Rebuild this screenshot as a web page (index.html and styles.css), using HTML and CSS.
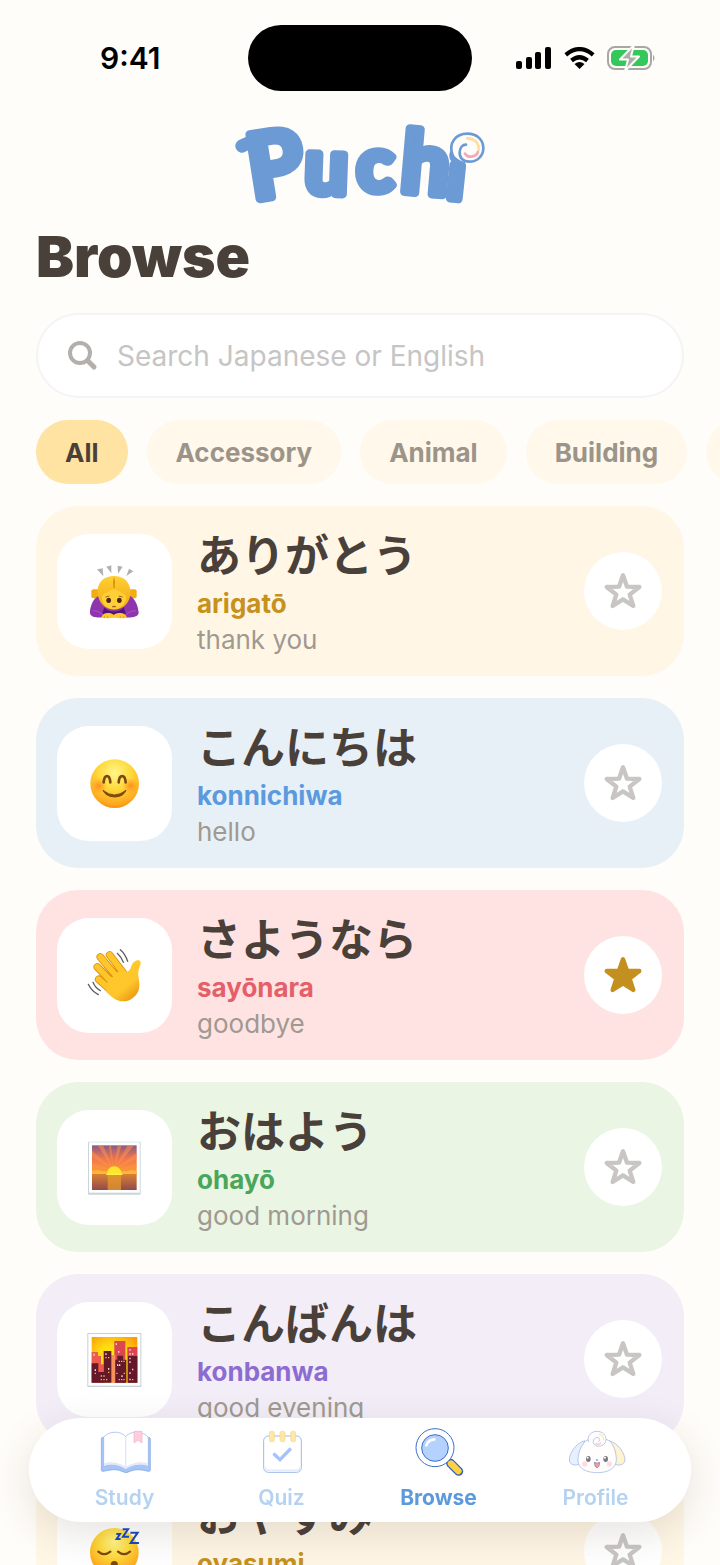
FILE: index.html
```
<!DOCTYPE html>
<html lang="en">
<head>
    <meta charset="UTF-8">
    <meta name="viewport" content="width=device-width, initial-scale=1.0">
    <title>Puchi - Browse</title>
    <link rel="stylesheet" href="styles.css">
</head>
<body>

    <!-- shared shapes -->
    <svg class="defs" aria-hidden="true">
        <defs>
            <radialGradient id="face" cx="50%" cy="28%" r="75%">
                <stop offset="0" stop-color="#fff68a"/>
                <stop offset="0.45" stop-color="#ffd93b"/>
                <stop offset="0.85" stop-color="#fda81d"/>
                <stop offset="1" stop-color="#ee8a12"/>
            </radialGradient>
            <radialGradient id="blush">
                <stop offset="0" stop-color="#ff7a1c" stop-opacity="0.75"/>
                <stop offset="1" stop-color="#ff8a1c" stop-opacity="0"/>
            </radialGradient>
            <linearGradient id="hand" x1="0" y1="0" x2="0.7" y2="1">
                <stop offset="0" stop-color="#ffc926"/>
                <stop offset="0.7" stop-color="#ffc62c"/>
                <stop offset="1" stop-color="#e89a10"/>
            </linearGradient>
            <linearGradient id="hair" x1="0" y1="0" x2="0" y2="1">
                <stop offset="0" stop-color="#ffd035"/>
                <stop offset="1" stop-color="#f0a80c"/>
            </linearGradient>
            <linearGradient id="sky" x1="0" y1="0" x2="0" y2="1">
                <stop offset="0" stop-color="#8a5a86"/>
                <stop offset="0.45" stop-color="#ee7650"/>
                <stop offset="1" stop-color="#ffa02c"/>
            </linearGradient>
            <linearGradient id="sea" x1="0" y1="0" x2="0" y2="1">
                <stop offset="0" stop-color="#d98034"/>
                <stop offset="1" stop-color="#914a4c"/>
            </linearGradient>
            <radialGradient id="dusk" cx="45%" cy="50%" r="70%">
                <stop offset="0" stop-color="#fff01c"/>
                <stop offset="0.5" stop-color="#ffd80f"/>
                <stop offset="1" stop-color="#fc980b"/>
            </radialGradient>
            <symbol id="star" viewBox="94 99 132 132">
                <path d="M160 118 172 152 209 153 180 176 191 210 160 190 129 210 140 176 111 153 148 152Z" stroke="currentColor" stroke-width="13" stroke-linejoin="round"/>
            </symbol>
        </defs>
    </svg>

    <div class="screen">
        <div class="status-bar">
            <span class="time">9:41</span>
            <div class="island"></div>
            <div class="status-icons">
                <svg width="36" height="22" viewBox="0 0 36 22">
                    <rect x="0" y="14" width="6" height="8" rx="2"/>
                    <rect x="10" y="10" width="6" height="12" rx="2"/>
                    <rect x="19" y="5" width="6" height="17" rx="2"/>
                    <rect x="29" y="0" width="6" height="22" rx="2"/>
                </svg>
                <svg width="31" height="22" viewBox="0 0 31 22">
                    <path d="M15.500 22 10.500 17Q15.500 13 20.500 17Z"/>
                    <path d="M7.500 13.500Q15.500 7 23.500 13.500" fill="none" stroke="#000" stroke-width="4.300"/>
                    <path d="M1.800 7.800Q15.500 -3.500 29.200 7.800" fill="none" stroke="#000" stroke-width="4.300"/>
                </svg>
                <svg width="49" height="24" viewBox="0 0 49 24">
                    <rect x="1" y="1" width="43" height="22" rx="7" fill="none" stroke="#a9a7a4" stroke-width="2"/>
                    <path d="M46 8.500Q49 12 46 15.500Z" fill="#a9a7a4"/>
                    <rect x="4" y="4" width="37" height="16" rx="5" fill="#34c759"/>
                    <path d="M27 -1 13 13.500H21L18 25 32 10.500H24Z" fill="#b0aeab" stroke="#fffdf9" stroke-width="2" stroke-linejoin="round"/>
                </svg>
            </div>
        </div>

        <header>
            <svg class="logo" viewBox="0 0 840 330" role="img" aria-label="Puchi">
                <g class="wordmark">
                    <text x="98" y="270" font-size="270" transform="rotate(-9 98 270)">P</text>
                    <text x="252" y="248" font-size="230" transform="rotate(2 252 248)">u</text>
                    <text x="410" y="244" font-size="230">c</text>
                    <text x="538" y="244" font-size="256" transform="rotate(5 538 244)">h</text>
                    <text x="678" y="263" font-size="196" transform="rotate(6 678 263)">i</text>
                </g>
                <path d="M66 108Q90 94 130 88" fill="none" stroke="#6b9ad4" stroke-width="40" stroke-linecap="round"/>
                <circle cx="744" cy="105" r="52" fill="#fffdf9"/>
                <g fill="none" stroke-width="8" stroke-linecap="round">
                    <path d="M698 136C684 98 708 71 742 71C772 71 790 90 790 115C790 140 770 155 748 155C728 155 718 142 719 126C720 112 728 104 738 104" stroke="#6b9ad4"/>
                    <path d="M742 85C762 84 777 98 776 120" stroke="#ffdf9b"/>
                    <path d="M774 126C768 142 744 145 735 131" stroke="#f7a8b4"/>
                </g>
            </svg>
            <h1>Browse</h1>
        </header>

        <label class="search">
            <svg width="30" height="30" viewBox="0 0 30 30" fill="none" stroke="#b5afab" stroke-linecap="round">
                <circle cx="12" cy="12" r="10" stroke-width="4"/>
                <path d="M20 20 26 26" stroke-width="5"/>
            </svg>
            <input type="search" placeholder="Search Japanese or English" aria-label="Search Japanese or English">
        </label>

        <div class="filters">
            <button class="chip active">All</button>
            <button class="chip">Accessory</button>
            <button class="chip">Animal</button>
            <button class="chip">Building</button>
            <button class="chip">Clothing</button>
        </div>

        <main class="words">
            <article class="card yellow">
                <div class="thumb">
                    <svg viewBox="170 187 168 168">
                        <path d="M200 206 217 203 219 227ZM228 198 243 194 243 218ZM262 195 277 198 263 219ZM296 204 309 212 288 226Z" fill="#b0b0b0"/>
                        <rect x="183" y="266" width="24" height="27" rx="6" fill="#f3ac12"/>
                        <rect x="295" y="266" width="24" height="27" rx="6" fill="#f3ac12"/>
                        <path d="M204 286C186 296 178 322 179 338C181 352 204 351 224 350L280 350C302 352 322 350 325 337C324 318 316 294 298 285Z" fill="#8d35ad"/>
                        <path d="M222 320C232 337 270 337 280 320L288 345H214Z" fill="#511574"/>
                        <path d="M186 330Q206 330 220 345M318 330Q298 330 284 345" fill="none" stroke="#a747c4" stroke-width="4"/>
                        <path d="M251 226C220 226 200 246 202 275C203 304 222 327 251 327C281 327 301 304 300 275C301 246 282 226 251 226Z" fill="url(#hair)"/>
                        <path d="M214 288C218 277 240 274 251 262C262 274 284 277 288 288C287 312 271 325 251 325C231 325 215 312 214 288Z" fill="#ffcf38"/>
                        <path d="M251 228Q257 246 251 268Q246 246 251 228" fill="#d98e0c"/>
                        <ellipse cx="235" cy="299" rx="7" ry="8" fill="#4d2710"/>
                        <ellipse cx="267" cy="299" rx="7" ry="8" fill="#4d2710"/>
                        <path d="M225 289 237 286M265 286 277 289" stroke="#a9670d" stroke-width="3"/>
                        <path d="M246 319Q251 315 256 319" fill="none" stroke="#a45518" stroke-width="4"/>
                        <path d="M214 349C216 336 240 333 250 343C262 333 286 336 289 349C284 355 264 353 252 349C240 353 220 355 214 349Z" fill="#ffc72f"/>
                        <path d="M222 352V346M232 352V346M270 352V346M280 352V346" stroke="#dc8e0d" stroke-width="2"/>
                    </svg>
                </div>
                <div class="word">
                    <h2 lang="ja">ありがとう</h2>
                    <p class="romaji">arigatō</p>
                    <p class="meaning">thank you</p>
                </div>
                <button class="fav" aria-label="Favourite"><svg><use href="#star"/></svg></button>
            </article>

            <article class="card blue">
                <div class="thumb">
                    <svg viewBox="80 75 168 168">
                        <circle cx="163" cy="161" r="73" fill="url(#face)"/>
                        <circle cx="116" cy="167" r="24" fill="url(#blush)"/>
                        <circle cx="210" cy="167" r="24" fill="url(#blush)"/>
                        <path d="M130 157C132 132 148 132 150 157M175 157C177 132 194 132 196 157" fill="none" stroke="#7c4a0c" stroke-width="8" stroke-linecap="round"/>
                        <path d="M128 181Q162 209 197 181Q190 200 163 201Q136 200 128 181Z" fill="#7c4a0c" stroke="#7c4a0c" stroke-width="3" stroke-linejoin="round"/>
                    </svg>
                </div>
                <div class="word">
                    <h2 lang="ja">こんにちは</h2>
                    <p class="romaji">konnichiwa</p>
                    <p class="meaning">hello</p>
                </div>
                <button class="fav" aria-label="Favourite"><svg><use href="#star"/></svg></button>
            </article>

            <article class="card pink">
                <div class="thumb">
                    <svg viewBox="80 81 168 168">
                        <g fill="none" stroke-linecap="round" stroke-linejoin="round">
                            <path d="M120 111 168 169M148 105 190 160M111 141 160 192M115 178 154 213" stroke="#dc8f12" stroke-width="23"/>
                            <path d="M120 111 168 169M148 105 190 160M111 141 160 192M115 178 154 213" stroke="#ffc529" stroke-width="18"/>
                        </g>
                        <path d="M140 190C150 172 165 156 190 149C202 159 207 155 213 139C217 126 229 118 238 122C246 127 236 140 234 155C232 169 240 186 236 206C232 226 211 244 188 244C168 244 155 232 138 216Z" fill="url(#hand)"/>
                        <path d="M131 141 158 171M151 134 172 155" fill="none" stroke="#df9514" stroke-width="3"/>
                        <path d="M180 89Q195 102 202 124M171 100Q182 110 189 127M98 187Q105 204 120 212M84 193Q94 214 114 224" fill="none" stroke="#5b5f63" stroke-width="4" stroke-linecap="round"/>
                    </svg>
                </div>
                <div class="word">
                    <h2 lang="ja">さようなら</h2>
                    <p class="romaji">sayōnara</p>
                    <p class="meaning">goodbye</p>
                </div>
                <button class="fav saved" aria-label="Favourite" aria-pressed="true"><svg><use href="#star"/></svg></button>
            </article>

            <article class="card green">
                <div class="thumb">
                    <svg viewBox="80 87 168 168">
                        <rect x="83" y="95" width="158" height="159" rx="2" fill="#c9d6d9"/>
                        <rect x="86" y="97" width="152" height="151" fill="#fff"/>
                        <rect x="95" y="106" width="134" height="88" fill="url(#sky)"/>
                        <path d="M160 180 95 122V140ZM160 180 112 106H128ZM160 180 145 106H152ZM160 180 172 106H184ZM160 180 202 106H222ZM160 180 229 128V146ZM160 180 95 160V172ZM160 180 229 162V174Z" fill="#ff9246" opacity="0.55"/>
                        <path d="M95 184Q110 178 125 184H200Q215 178 229 184V194H95Z" fill="#ffb43a"/>
                        <path d="M140 194C139 160 184 160 184 194Z" fill="#ffe52d"/>
                        <rect x="95" y="192" width="134" height="48" fill="url(#sea)"/>
                        <rect x="142" y="192" width="40" height="48" fill="#e79a2c" opacity="0.75"/>
                        <rect x="138" y="191" width="48" height="4" fill="#fff04a"/>
                    </svg>
                </div>
                <div class="word">
                    <h2 lang="ja">おはよう</h2>
                    <p class="romaji">ohayō</p>
                    <p class="meaning">good morning</p>
                </div>
                <button class="fav" aria-label="Favourite"><svg><use href="#star"/></svg></button>
            </article>

            <article class="card purple">
                <div class="thumb">
                    <svg viewBox="80 63 168 168">
                        <rect x="81" y="69" width="162" height="162" fill="#c5d1d2"/>
                        <rect x="84" y="72" width="156" height="155" fill="#fff"/>
                        <rect x="94" y="81" width="137" height="137" fill="url(#dusk)"/>
                        <path d="M94 126H113V138H122V163H130V218H94Z" fill="#ee5a4c"/>
                        <path d="M162 93H195V218H162ZM201 111H231V218H201Z" fill="#dd4650"/>
                        <rect x="152" y="135" width="13" height="83" fill="#f6915c"/>
                        <path d="M94 160H114V186H130V123H153V218H94ZM165 149H171V137H188V149H198V218H165ZM203 138H231V218H203Z" fill="#64182a"/>
                        <path d="M99 131h4v6h-4zM166 100h4v5h-4zM173 123h4v5h-4zM207 117h4v5h-4zM207 129h4v5h-4zM215 129h4v5h-4zM135 130h4v5h-4zM207 143h4v5h-4zM207 154h4v5h-4zM170 163h4v5h-4zM176 163h4v5h-4zM143 174h4v5h-4zM103 178h4v5h-4zM215 176h4v5h-4zM207 187h4v5h-4zM183 196h4v5h-4zM207 206h4v5h-4z" fill="#ffd4d0"/>
                        <path d="M135 141h4v4h-4zM143 141h4v4h-4zM175 152h4v4h-4zM182 152h4v4h-4zM189 152h4v4h-4zM103 188h4v4h-4zM143 185h4v4h-4zM168 188h4v4h-4zM190 188h4v4h-4zM121 196h4v4h-4zM129 196h4v4h-4zM121 207h4v4h-4zM129 207h4v4h-4zM137 207h4v4h-4zM175 207h4v4h-4zM182 207h4v4h-4zM189 207h4v4h-4zM215 207h4v4h-4z" fill="#f4c02f"/>
                    </svg>
                </div>
                <div class="word">
                    <h2 lang="ja">こんばんは</h2>
                    <p class="romaji">konbanwa</p>
                    <p class="meaning">good evening</p>
                </div>
                <button class="fav" aria-label="Favourite"><svg><use href="#star"/></svg></button>
            </article>

            <article class="card yellow">
                <div class="thumb">
                    <svg viewBox="260 369 168 168">
                        <circle cx="342" cy="457" r="73" fill="url(#face)"/>
                        <path d="M294 455Q311 470 330 455M353 455Q371 470 389 455" fill="none" stroke="#7c4a0c" stroke-width="7" stroke-linecap="round"/>
                        <ellipse cx="342" cy="496" rx="11" ry="13" fill="#7c4a0c"/>
                        <path d="M348 402H359L349 417H361M367 388H383L368 410H386M390 398H412L391 429H416" fill="none" stroke="#1749c4" stroke-width="6"/>
                    </svg>
                </div>
                <div class="word">
                    <h2 lang="ja">おやすみ</h2>
                    <p class="romaji">oyasumi</p>
                    <p class="meaning">good night</p>
                </div>
                <button class="fav" aria-label="Favourite"><svg><use href="#star"/></svg></button>
            </article>
        </main>

        <nav class="tab-bar">
            <a href="#study">
                <svg viewBox="282 84 180 144">
                    <path d="M304 112Q301 112 301 118V210Q301 215 308 214Q345 204 362 214Q375 222 388 214Q408 204 441 214Q448 215 448 210V118Q448 112 444 112Z" fill="#a5c4f7" stroke="#7ea2e0" stroke-width="2"/>
                    <path d="M308 112C320 94 358 90 374 110C390 90 428 94 442 112V198C420 189 390 194 374 208C358 194 330 189 308 198Z" fill="#fff" stroke="#8fb0ea" stroke-width="2"/>
                    <path d="M309 190C330 182 360 190 374 201C390 190 420 182 441 190V198C420 190 390 194 374 208C358 194 330 190 309 198Z" fill="#e4e9f8"/>
                    <path d="M374 112V204" stroke="#dfe8fb" stroke-width="4"/>
                    <path d="M399 94H423V129L411 120 399 129Z" fill="#ffcddd" stroke="#f6afc6" stroke-width="2"/>
                </svg>
                Study
            </a>
            <a href="#quiz">
                <svg viewBox="753 84 180 144">
                    <rect x="788" y="108" width="113" height="109" rx="14" fill="#fff" stroke="#9eb9ea" stroke-width="3"/>
                    <path d="M791 200Q792 211 803 211H886Q897 211 898 200" fill="none" stroke="#e5ebfa" stroke-width="5"/>
                    <g fill="#ffe8a6" stroke="#f5d88c" stroke-width="2">
                        <rect x="805" y="94" width="15" height="31" rx="5"/>
                        <rect x="837" y="94" width="15" height="31" rx="5"/>
                        <rect x="869" y="94" width="15" height="31" rx="5"/>
                    </g>
                    <path d="M821 164 837 179 866 149" fill="none" stroke="#a5c2fa" stroke-width="10" stroke-linecap="square"/>
                </svg>
                Quiz
            </a>
            <a href="#browse" class="current" aria-current="page">
                <svg viewBox="142 84 180 144">
                    <path d="M267 190 291 214" stroke="#2d5fb4" stroke-width="27" stroke-linecap="round"/>
                    <path d="M268 191 290 213" stroke="#ffd044" stroke-width="20" stroke-linecap="round"/>
                    <path d="M254 178 260 184" stroke="#aac4f0" stroke-width="8"/>
                    <circle cx="220" cy="143" r="57" fill="#fff" stroke="#3b70cb" stroke-width="3"/>
                    <circle cx="220" cy="144" r="40" fill="#b5d1fd" stroke="#3b70cb" stroke-width="3"/>
                    <path d="M194 136Q199 120 218 118" fill="none" stroke="#fff" stroke-width="8" stroke-linecap="round"/>
                </svg>
                Browse
            </a>
            <a href="#profile">
                <svg viewBox="612 84 180 144">
                    <path d="M668 122C642 130 622 158 622 180C623 197 644 199 654 190Z" fill="#e6f0ff" stroke="#94afe0" stroke-width="2"/>
                    <path d="M742 122C768 130 788 158 789 180C787 197 766 199 757 190Z" fill="#fff3d0" stroke="#94afe0" stroke-width="2"/>
                    <path d="M672 122C690 112 722 112 742 122C756 136 763 158 763 180C762 207 736 218 706 218C675 218 649 207 648 181C648 158 657 136 672 122Z" fill="#fffefd" stroke="#94afe0" stroke-width="2"/>
                    <path d="M680 126C673 108 688 94 705 94C723 94 733 107 732 120C731 133 718 140 706 138C692 137 690 120 700 114C710 108 718 120 709 125" fill="#fffefd" stroke="#94afe0" stroke-width="2"/>
                    <path d="M712 102Q726 107 725 121" fill="none" stroke="#ffe8b4" stroke-width="4"/>
                    <path d="M700 130Q709 136 717 129" fill="none" stroke="#ffc6cf" stroke-width="4"/>
                    <circle cx="668" cy="192" r="8" fill="#ffdbe1"/>
                    <circle cx="742" cy="192" r="8" fill="#ffdbe1"/>
                    <ellipse cx="679" cy="177" rx="7" ry="9" fill="#777982"/>
                    <ellipse cx="731" cy="177" rx="7" ry="9" fill="#777982"/>
                    <circle cx="677" cy="173" r="3" fill="#fff"/>
                    <circle cx="729" cy="173" r="3" fill="#fff"/>
                    <ellipse cx="705" cy="180" rx="4" ry="3" fill="#8bb9f2"/>
                    <path d="M697 187Q705 192 713 187Q712 203 705 203Q698 203 697 187Z" fill="#f29cac" stroke="#85747e" stroke-width="2"/>
                </svg>
                Profile
            </a>
        </nav>
    </div>

</body>
</html>
```
FILE: styles.css
```
* {
    box-sizing: border-box;
}
body {
    margin: 0;
    background: #fffdf9;
    color: #4a403a;
    font-family: Inter, "Noto Sans CJK JP", sans-serif;
}
h1, h2, p {
    margin: 0;
}
button {
    border: none;
    padding: 0;
    font: inherit;
    cursor: pointer;
}
.defs {
    position: absolute;
    width: 0;
    height: 0;
}
.screen {
    height: 100vh;
    overflow: hidden;
    padding: 0 36px;
}

/* status bar */
.status-bar {
    display: grid;
    grid-template-columns: 1fr 224px 1fr;
    align-items: center;
    height: 110px;
    padding-top: 6px;
}
.time {
    padding-left: 64px;
    color: #000;
    font-size: 30px;
    font-weight: 600;
}
.island {
    height: 66px;
    border-radius: 33px;
    background: #000;
}
.status-icons {
    display: flex;
    align-items: center;
    justify-content: flex-end;
    gap: 12px;
    padding-right: 28px;
}

/* header */
.logo {
    display: block;
    width: 280px;
    height: 110px;
    margin: 0 auto;
}
.wordmark {
    fill: #6b9ad4;
    stroke: #6b9ad4;
    stroke-width: 26px;
    stroke-linejoin: round;
    font-family: Lato, sans-serif;
    font-weight: 700;
}
h1 {
    padding-top: 7px;
    font-size: 57px;
    line-height: 60px;
    font-weight: 900;
}

/* search */
.search {
    display: flex;
    align-items: center;
    gap: 19px;
    height: 85px;
    margin-top: 26px;
    padding: 0 30px;
    border: 2px solid #f5f4f5;
    border-radius: 43px;
    background: #fff;
}
.search input {
    flex: 1;
    min-width: 0;
    border: none;
    outline: none;
    padding: 0;
    background: none;
    color: #4a403a;
    font: inherit;
    font-size: 28px;
}
.search input::placeholder {
    color: #c6c5c5;
}

/* category chips */
.filters {
    display: flex;
    gap: 19px;
    margin: 22px -36px 22px 0;
    overflow: hidden;
}
.chip {
    flex: none;
    height: 64px;
    padding: 0 29px;
    border-radius: 32px;
    background: #fff8eb;
    color: #9c9489;
    font-size: 26px;
    font-weight: 700;
}
.chip.active {
    background: #fee3a2;
    color: #4a403a;
}

/* word cards */
.words {
    display: flex;
    flex-direction: column;
    gap: 22px;
}
.card {
    display: flex;
    align-items: center;
    gap: 25px;
    height: 170px;
    padding: 0 22px 0 21px;
    border-radius: 42px;
}
.yellow {
    background: #fff6e6;
    --accent: #c6911c;
}
.blue {
    background: #e8f0f7;
    --accent: #5b9ade;
}
.pink {
    background: #ffe3e3;
    --accent: #e55f69;
}
.green {
    background: #eaf5e4;
    --accent: #4aa65a;
}
.purple {
    background: #f2edf7;
    --accent: #8d6cd1;
}
.thumb {
    display: grid;
    place-items: center;
    width: 115px;
    height: 115px;
    border-radius: 32px;
    background: #fff;
}
.thumb svg {
    width: 56px;
    height: 56px;
}
.word {
    flex: 1;
}
.word h2 {
    padding-top: 2px;
    margin-bottom: 6px;
    font-family: "Noto Sans CJK JP", sans-serif;
    font-size: 44px;
    line-height: 54px;
    font-weight: 700;
}
.word p {
    font-size: 26px;
    line-height: 36px;
}
.word .romaji {
    color: var(--accent);
    font-weight: 700;
}
.word .meaning {
    color: #a09990;
}
.fav {
    display: grid;
    place-items: center;
    width: 78px;
    height: 78px;
    border-radius: 50%;
    background: #fff;
    color: #c8c5c4;
}
.fav svg {
    width: 44px;
    height: 44px;
    fill: none;
}
.fav.saved {
    color: #c3901f;
}
.fav.saved svg {
    fill: currentColor;
}

/* floating tab bar */
.tab-bar {
    position: fixed;
    left: 29px;
    right: 29px;
    bottom: 43px;
    display: grid;
    grid-template-columns: repeat(4, 1fr);
    height: 104px;
    padding: 10px 17px;
    border-radius: 52px;
    background: #fff;
    box-shadow: 0 12px 40px rgba(60, 50, 30, 0.13);
}
.tab-bar a {
    display: flex;
    flex-direction: column;
    align-items: center;
    gap: 8px;
    color: #b5d2f1;
    font-size: 21px;
    line-height: 28px;
    font-weight: 600;
    text-decoration: none;
}
.tab-bar .current {
    color: #5b9adc;
    font-weight: 700;
}
.tab-bar svg {
    width: 60px;
    height: 48px;
}
```
